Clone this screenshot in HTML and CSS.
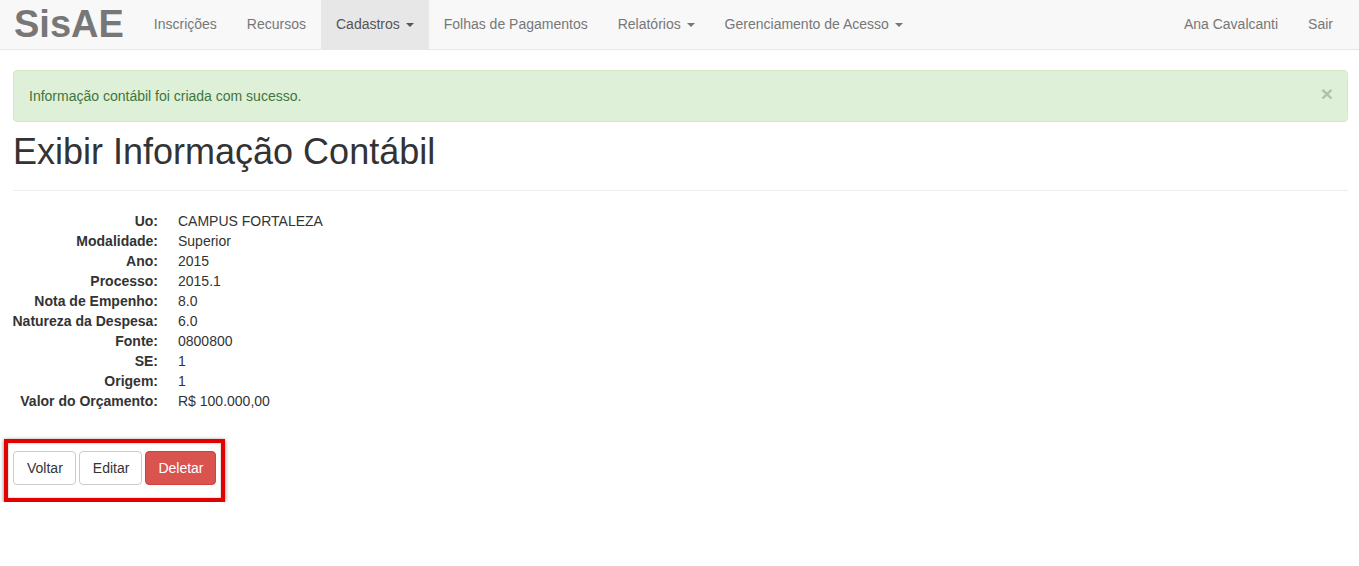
FILE: index.html
```html
<!DOCTYPE html>
<html lang="pt-BR">
<head>
    <meta charset="UTF-8">
    <meta name="viewport" content="width=device-width, initial-scale=1.0">
    <title>SisAE - Exibir Informação Contábil</title>
    <link rel="stylesheet" href="styles.css">
</head>
<body>
    <nav class="navbar">
        <a class="brand" href="#">SisAE</a>
        <ul class="nav">
            <li><a href="#">Inscrições</a></li>
            <li><a href="#">Recursos</a></li>
            <li class="active"><a href="#">Cadastros <span class="caret"></span></a></li>
            <li><a href="#">Folhas de Pagamentos</a></li>
            <li><a href="#">Relatórios <span class="caret"></span></a></li>
            <li><a href="#">Gerenciamento de Acesso <span class="caret"></span></a></li>
        </ul>
        <ul class="nav nav-right">
            <li><a href="#">Ana Cavalcanti</a></li>
            <li><a href="#">Sair</a></li>
        </ul>
    </nav>

    <div class="container">
        <div class="alert">
            Informação contábil foi criada com sucesso.
            <button class="close" type="button">&times;</button>
        </div>

        <h1>Exibir Informação Contábil</h1>
        <hr>

        <dl class="details">
            <dt>Uo:</dt><dd>CAMPUS FORTALEZA</dd>
            <dt>Modalidade:</dt><dd>Superior</dd>
            <dt>Ano:</dt><dd>2015</dd>
            <dt>Processo:</dt><dd>2015.1</dd>
            <dt>Nota de Empenho:</dt><dd>8.0</dd>
            <dt>Natureza da Despesa:</dt><dd>6.0</dd>
            <dt>Fonte:</dt><dd>0800800</dd>
            <dt>SE:</dt><dd>1</dd>
            <dt>Origem:</dt><dd>1</dd>
            <dt>Valor do Orçamento:</dt><dd>R$ 100.000,00</dd>
        </dl>

        <div class="actions">
            <a class="btn" href="#">Voltar</a>
            <a class="btn" href="#">Editar</a>
            <a class="btn btn-danger" href="#">Deletar</a>
        </div>
    </div>
</body>
</html>
```

FILE: styles.css
```css
* {
    box-sizing: border-box;
}

body {
    margin: 0;
    font-family: 'Liberation Sans', Arial, sans-serif;
    font-size: 14px;
    line-height: 20px;
    color: #333;
    background-color: #fff;
}

a {
    text-decoration: none;
}

.navbar {
    display: flex;
    align-items: stretch;
    height: 50px;
    padding-left: 14px;
    background-color: #f8f8f8;
    border-bottom: 1px solid #e7e7e7;
}

.brand {
    font-size: 38px;
    font-weight: bold;
    line-height: 49px;
    color: #777;
    padding-right: 15px;
}

.nav {
    display: flex;
    list-style: none;
    margin: 0;
    padding: 0;
}

.nav-right {
    margin-left: auto;
    padding-right: 11px;
}

.nav a {
    display: block;
    padding: 15px;
    color: #777;
    line-height: 19px;
}

.nav .active a {
    background-color: #e7e7e7;
    color: #555;
}

.caret {
    display: inline-block;
    width: 0;
    height: 0;
    margin-left: 2px;
    vertical-align: middle;
    border-top: 4px solid;
    border-left: 4px solid transparent;
    border-right: 4px solid transparent;
}

.container {
    padding: 20px 11px 0 13px;
}

.alert {
    position: relative;
    padding: 15px 35px 15px 15px;
    background-color: #dff0d8;
    border: 1px solid #d6e9c6;
    border-radius: 4px;
    color: #3c763d;
}

.close {
    position: absolute;
    top: 13px;
    right: 14px;
    padding: 0;
    background: none;
    border: 0;
    font-family: inherit;
    font-size: 21px;
    font-weight: bold;
    line-height: 20px;
    color: #000;
    opacity: 0.2;
    cursor: pointer;
}

h1 {
    margin: 10px 0 0;
    font-size: 36px;
    font-weight: 500;
    line-height: 1.1;
    color: #333;
}

hr {
    margin: 18px 0 20px;
    border: 0;
    border-top: 1px solid #eee;
}

.details {
    display: grid;
    grid-template-columns: 158px 1fr;
    column-gap: 20px;
    margin: 0 0 0 -13px;
}

.details dt {
    font-weight: bold;
    text-align: right;
    white-space: nowrap;
}

.details dd {
    margin: 0;
}

.actions {
    display: inline-flex;
    gap: 3px;
    margin: 28px 0 0 -9px;
    padding: 8px 5px 13px;
    border: 4px solid #e30000;
    box-shadow: 0 1px 4px rgba(0, 0, 0, 0.55), inset 0 0 2px rgba(0, 0, 0, 0.4);
}

.btn {
    display: inline-block;
    padding: 6px 12px 6px 13px;
    border: 1px solid #ccc;
    border-radius: 4px;
    background-color: #fff;
    color: #333;
    font-size: 14px;
    line-height: 20px;
}

.btn-danger {
    padding: 6px 11px 6px 12px;
    background-color: #d9534f;
    border-color: #d43f3a;
    color: #fff;
}
```
